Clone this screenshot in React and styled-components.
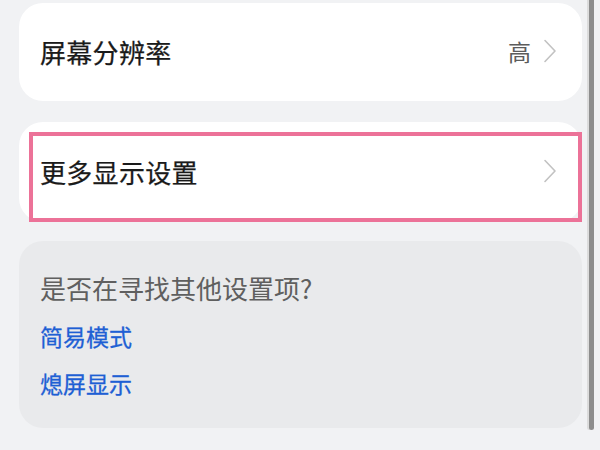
import React from "react";
import styled, { createGlobalStyle } from "styled-components";

const Global = createGlobalStyle`
  html, body { margin: 0; padding: 0; background: #f1f2f4; }
  body { font-family: "Noto Sans CJK SC", "Noto Sans", sans-serif; }
`;

const Page = styled.div`
  position: relative;
  width: 600px;
  height: 450px;
  overflow: hidden;
  background: #f1f2f4;
  box-sizing: border-box;
  padding: 3px 18px 0 19px;
  display: flex;
  flex-direction: column;
  gap: 21px;
`;

const Card = styled.div`
  position: relative;
  background: ${(p) => (p.$muted ? "#e9eaec" : "#ffffff")};
  border-radius: 24px;
  box-sizing: border-box;
  height: ${(p) => p.$h}px;
  margin-top: ${(p) => p.$mt || 0}px;
`;

const Row = styled.div`
  height: 100%;
  display: flex;
  align-items: center;
  padding: 0 25px 2px 21px;
  box-sizing: border-box;
`;

const Title = styled.div`
  flex: 1;
  font-size: 26px;
  font-weight: 400;
  -webkit-text-stroke: 0.25px #1a1a1a;
  color: #1a1a1a;
  letter-spacing: 0.3px;
`;

const Value = styled.span`
  font-size: 23px;
  color: #5c5c5c;
  margin-right: 12px;
`;

const Highlight = styled.div`
  position: absolute;
  left: 10px;
  top: 10px;
  right: 0;
  bottom: 0;
  border: 4px solid #ec7298;
  pointer-events: none;
`;

const Help = styled.div`
  padding: 30px 21px 0 21px;
  display: flex;
  flex-direction: column;
`;

const Question = styled.div`
  font-size: 26px;
  color: #5f5f5f;
  line-height: 34px;
  margin-bottom: 16px;
`;

const Link = styled.div`
  font-size: 23px;
  font-weight: 400;
  -webkit-text-stroke: 0.3px #1e5fd4;
  color: #1e5fd4;
  line-height: 30px;
  margin-bottom: 17px;
`;

const Scrollbar = styled.div`
  position: absolute;
  left: 589px;
  top: 0;
  width: 5px;
  height: 430px;
  background: #8d8d8d;
  border-radius: 0 0 3px 3px;
  box-shadow: -2px 0 0 #dcdcdc;
`;

const Chevron = () => (
  <svg width="14" height="24" viewBox="0 0 14 24" fill="none">
    <path d="M2 1.5 L12 12 L2 22.5" stroke="#c2c2c2" strokeWidth="1.6" strokeLinecap="round" strokeLinejoin="round" />
  </svg>
);

export default function App() {
  return (
    <>
      <Global />
      <Page>
        <Card $h={98}>
          <Row>
            <Title>屏幕分辨率</Title>
            <Value>高</Value>
            <Chevron />
          </Row>
        </Card>
        <Card $h={100}>
          <Row>
            <Title>更多显示设置</Title>
            <Chevron />
          </Row>
          <Highlight />
        </Card>
        <Card $muted $h={187} $mt={-2}>
          <Help>
            <Question>是否在寻找其他设置项?</Question>
            <Link>简易模式</Link>
            <Link>熄屏显示</Link>
          </Help>
        </Card>
        <Scrollbar />
      </Page>
    </>
  );
}
